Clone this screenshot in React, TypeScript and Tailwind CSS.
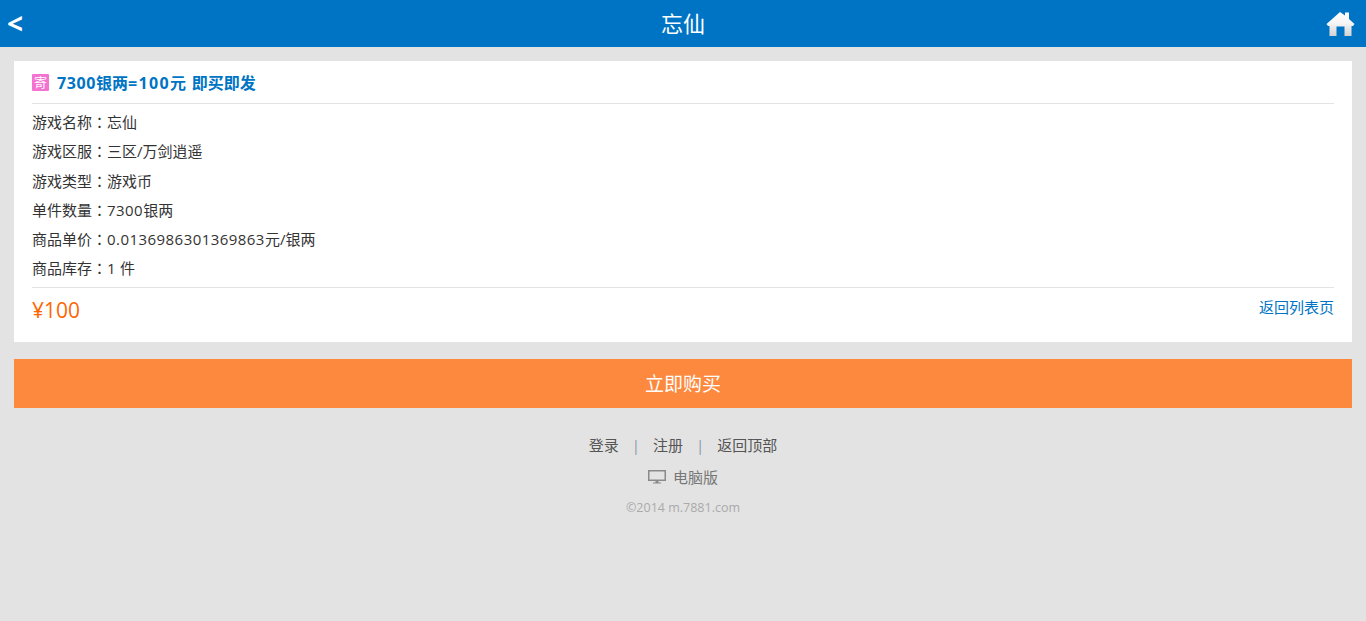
import React from 'react';

const FONT = "font-['Open_Sans','Noto_Sans_CJK_SC',sans-serif]";

const rows = [
  { label: '游戏名称', value: <>忘仙</> },
  { label: '游戏区服', value: <>三区/万剑逍遥</> },
  { label: '游戏类型', value: <>游戏币</> },
  { label: '单件数量', value: <><Num>7300</Num>银两</> },
  { label: '商品单价', value: <><Num>0.0136986301369863</Num>元/银两</> },
  { label: '商品库存', value: <><Num>1</Num> 件</> },
];

function Num({ children }: { children: React.ReactNode }) {
  return <span className="tracking-[0.45px]">{children}</span>;
}

const HomeIcon = () => (
  <svg width="29" height="25" viewBox="0 0 29 25">
    <defs>
      <linearGradient id="homeFill" x1="0" y1="0" x2="0" y2="1">
        <stop offset="0" stopColor="#ffffff" />
        <stop offset="0.45" stopColor="#f6f6f6" />
        <stop offset="1" stopColor="#d2d2d2" />
      </linearGradient>
    </defs>
    <path
      d="M14 1 L19 4.5 V1.5 H23 V8 L28.5 13 L27 15 H25.5 V25 H18.5 V15.5 H10.5 V25 H3.5 V15 H2 L0.5 13 Z"
      fill="url(#homeFill)"
    />
  </svg>
);

const MonitorIcon = () => (
  <svg width="18" height="14" viewBox="0 0 18 14" fill="none" className="text-[#8a8a8a]">
    <rect x="0.75" y="0.75" width="16.5" height="9.5" stroke="currentColor" strokeWidth="1.5" />
    <path d="M7.5 11 H10.5 V12.5 H13 V13.5 H5 V12.5 H7.5 Z" fill="currentColor" />
  </svg>
);

export default function App() {
  return (
    <div className={`min-h-[621px] bg-[#e3e3e3] ${FONT}`}>
      {/* Top bar */}
      <header className="h-[47px] bg-[#0074c4] flex items-center justify-between text-white">
        <span className="w-[60px] pl-[7px] text-[28px] font-bold leading-[47px]">&lt;</span>
        <h1 className="text-[22px] leading-[47px] font-normal">忘仙</h1>
        <span className="w-[60px] flex justify-end pr-[11px]">
          <HomeIcon />
        </span>
      </header>

      <main className="px-[14px] pt-[14px]">
        {/* Item card */}
        <section className="bg-white px-[18px] h-[281px]">
          <div className="h-[43px] flex items-center gap-2 border-b border-[#e3e3e3]">
            <span className="w-[17px] h-[17px] rounded-[1px] bg-[#f472d0] text-white text-[13px] leading-[17px] text-center">寄</span>
            <h2 className="mt-[2px] text-[16px] leading-[45px] font-bold text-[#0074c4]">
              <span className="tracking-[0.6px]">7300</span>银两
              <span className="tracking-[1.35px]">=100</span>元
              <span className="tracking-[1.6px]"> </span>即买即发
            </h2>
          </div>
          <ul className="pt-[4.2px] pb-[3.8px] border-b border-[#e3e3e3]">
            {rows.map((row) => (
              <li key={row.label} className="h-[29.2px] leading-[28px] text-[15px] text-[#333333]">
                {row.label}
                <span className="font-['Noto_Sans_CJK_TC',sans-serif]">：</span>
                {row.value}
              </li>
            ))}
          </ul>
          <div className="flex items-start justify-between">
            <span className="text-[21px] leading-[45px] text-[#ff6600]">¥100</span>
            <a className="text-[15px] leading-[39px] text-[#0074c4]">返回列表页</a>
          </div>
        </section>

        <button className="mt-[17px] w-full h-[49px] pt-[2px] bg-[#fc893e] text-white text-[19px]">立即购买</button>
      </main>

      {/* Footer links */}
      <footer className="pt-[26px] flex flex-col items-center">
        <div className="flex items-center text-[15px] leading-[22px] text-[#555555]">
          <a>登录</a>
          <span className="mx-[13px] text-[#8c97ab]">|</span>
          <a>注册</a>
          <span className="mx-[13px] text-[#8c97ab]">|</span>
          <a>返回顶部</a>
        </div>
        <div className="mt-[10px] flex items-center gap-[7px] text-[15px] leading-[22px] text-[#777777]">
          <MonitorIcon />
          <span>电脑版</span>
        </div>
        <p className="mt-[12px] text-[12.5px] leading-[16px] text-[#aaaaaa]">©2014 m.7881.com</p>
      </footer>
    </div>
  );
}
